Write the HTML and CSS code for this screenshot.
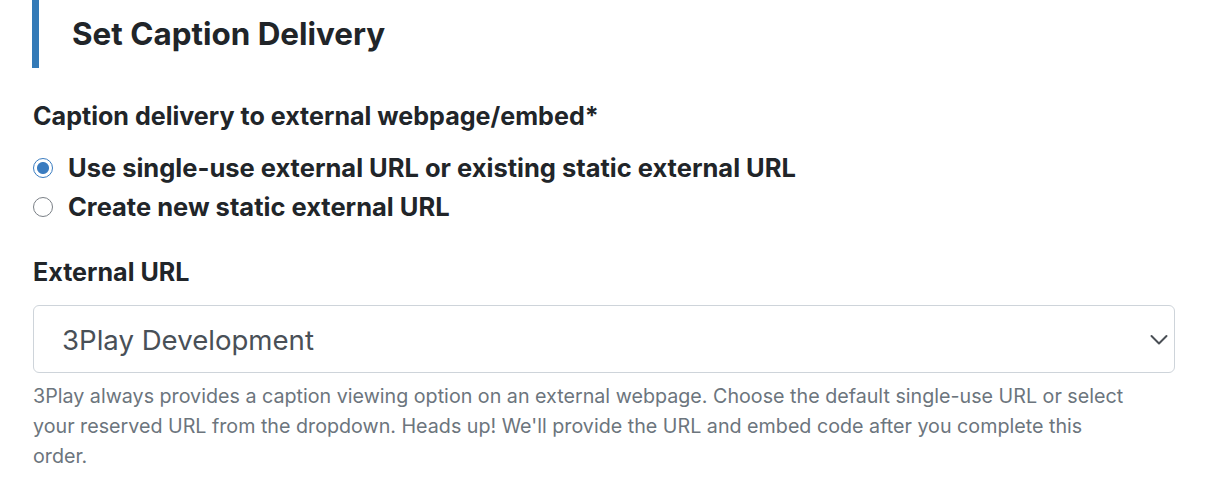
FILE: index.html
```html
<!DOCTYPE html>
<html>
<head>
<meta charset="utf-8">
<link rel="stylesheet" href="styles.css">
</head>
<body>
<div class="page">
  <div class="section-title">
    <h2>Set Caption Delivery</h2>
  </div>
  <div class="group">
    <div class="label">Caption delivery to external webpage/embed*</div>
    <div class="radios">
      <label class="radio"><span class="dot checked"></span><span>Use single-use external URL or existing static external URL</span></label>
      <label class="radio"><span class="dot"></span><span>Create new static external URL</span></label>
    </div>
  </div>
  <div class="group">
    <div class="label">External URL</div>
    <div class="select">
      <span>3Play Development</span>
      <svg class="chev" width="18" height="12" viewBox="0 0 18 12"><path d="M1.5 2 L9 9.5 L16.5 2" fill="none" stroke="#4a4f55" stroke-width="2" stroke-linecap="round" stroke-linejoin="round"/></svg>
    </div>
    <p class="help">3Play always provides a caption viewing option on an external webpage. Choose the default single-use URL or select your reserved URL from the dropdown. Heads up! We'll provide the URL and embed code after you complete this order.</p>
  </div>
</div>
</body>
</html>
```
FILE: styles.css
```css
* { box-sizing: border-box; }
body {
  margin: 0;
  background: #fff;
  font-family: Inter, "Noto Sans", sans-serif;
  color: #212529;
}
.page {
  padding: 0 34px 0 32px;
}
.section-title {
  border-left: 7px solid #337ab7;
  height: 68px;
  display: flex;
  align-items: center;
  padding-left: 33px;
}
.section-title h2 {
  margin: 0;
  font-size: 31.4px;
  font-weight: 700;
}
.group {
  padding-left: 1px;
}
.label {
  margin-top: 33px;
  font-size: 25.1px;
  font-weight: 700;
  line-height: 30px;
}
.radios {
  margin-top: 17px;
  display: flex;
  flex-direction: column;
}
.radio {
  display: flex;
  align-items: center;
  gap: 15px;
  height: 39px;
  font-size: 25.5px;
  font-weight: 700;
}
.dot {
  width: 20px;
  height: 20px;
  border-radius: 50%;
  border: 1.5px solid #7a7f86;
  flex: none;
}
.dot.checked {
  border: 1.5px solid #3a7cc0;
  background: radial-gradient(circle, #3a7cc0 0 5.5px, #fff 6.5px);
}
.group + .group .label {
  margin-top: 31px;
}
.select {
  margin-top: 18px;
  height: 68px;
  border: 1px solid #ced4da;
  border-radius: 6px;
  display: flex;
  align-items: center;
  justify-content: space-between;
  padding: 2px 6px 0 28px;
  font-size: 27.6px;
  color: #495057;
}
.help {
  margin: 8px 0 0;
  padding-right: 40px;
  font-size: 19.7px;
  line-height: 30px;
  color: #6c757d;
}
```
